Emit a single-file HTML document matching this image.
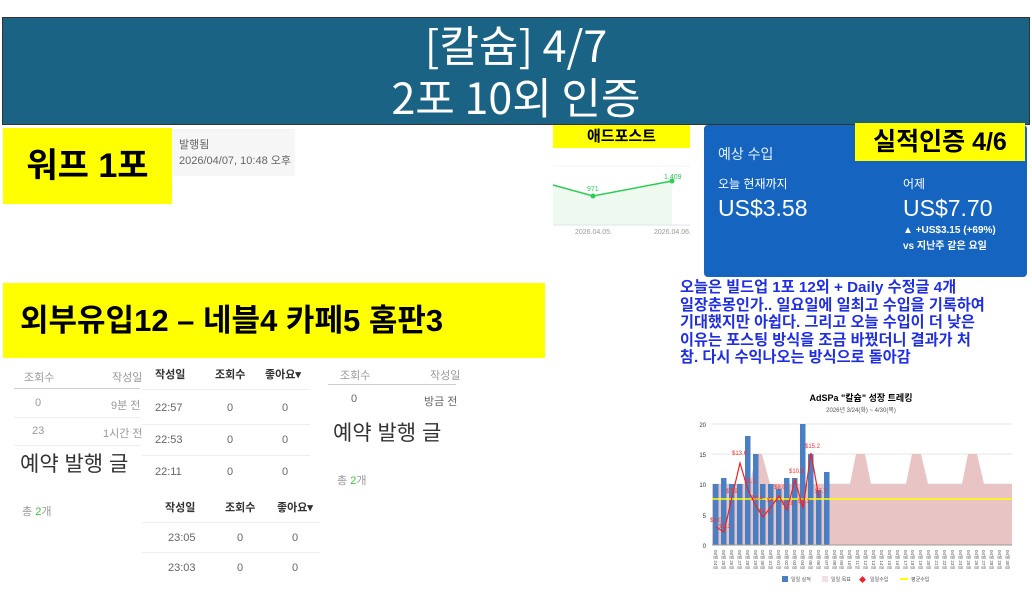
<!DOCTYPE html><html><head><meta charset="utf-8"><style>
body{margin:0;width:1032px;height:594px;background:#fff;position:relative;overflow:hidden;font-family:"Liberation Sans","Noto Sans CJK KR",sans-serif}
div,span{position:absolute;white-space:nowrap}
.y{background:#ff0;font-weight:bold;color:#000}
.g{color:#999;font-size:11px}
.d{color:#666;font-size:11px}
.hb{color:#333;font-size:11px;font-weight:bold}
.ln{height:1px;background:#eee}
</style></head><body>
<div style="left:2px;top:17px;width:1026px;height:106px;background:#1a6385;border:1px solid #333;color:#fff;text-align:center;font-size:43px;line-height:52px;font-family:'Noto Sans CJK KR',sans-serif;font-weight:400">[칼슘] 4/7<br>2포 10외 인증</div>

<div class="y" style="left:3px;top:128px;width:169px;height:76px;font-size:34px;line-height:76px;text-align:center">워프 1포</div>
<div style="left:172px;top:129px;width:123px;height:47px;background:#f6f6f6"></div>
<div class="d" style="left:179px;top:136px">발행됨</div>
<div class="d" style="left:179px;top:152px">2026/04/07, 10:48 오후</div>

<div class="y" style="left:553px;top:125px;width:137px;height:23px;font-size:15px;line-height:23px;text-align:center">애드포스트</div>
<svg style="position:absolute;left:540px;top:160px" width="160" height="80">
<line x1="13" y1="6" x2="150" y2="6" stroke="#f3f3f3"/>
<polygon points="13,25 53,36 132,21 132,65 13,65" fill="#eef9f0"/>
<line x1="13" y1="65" x2="150" y2="65" stroke="#dde4ee"/>
<polyline points="13,25 53,36 132,21" fill="none" stroke="#2ecc55" stroke-width="1.5"/>
<circle cx="53" cy="36" r="2.5" fill="#2ecc55"/><circle cx="132" cy="21" r="2.5" fill="#2ecc55"/>
<text x="47" y="31" font-size="7" fill="#2ecc55" font-family="Liberation Sans">971</text>
<text x="124" y="19" font-size="7" fill="#2ecc55" font-family="Liberation Sans">1,409</text>
<text x="35" y="74" font-size="7" fill="#999" font-family="Liberation Sans">2026.04.05.</text>
<text x="114" y="74" font-size="7" fill="#999" font-family="Liberation Sans">2026.04.06.</text>
</svg>

<div style="left:704px;top:125px;width:323px;height:152px;background:#1565c0;border-radius:4px"></div>
<div style="left:718px;top:144px;color:#e6eefa;font-size:14px">예상 수입</div>
<div style="left:718px;top:175px;color:#fff;font-size:12px">오늘 현재까지</div>
<div style="left:718px;top:195px;color:#fff;font-size:23px">US$3.58</div>
<div style="left:903px;top:175px;color:#fff;font-size:12px">어제</div>
<div style="left:903px;top:195px;color:#fff;font-size:23px">US$7.70</div>
<div style="left:903px;top:225px;color:#fff;font-size:10px;font-weight:bold">▲ +US$3.15 (+69%)</div>
<div style="left:903px;top:237px;color:#fff;font-size:10px;font-weight:bold">vs 지난주 같은 요일</div>
<div class="y" style="left:855px;top:123px;width:170px;height:38px;font-size:25px;line-height:38px;text-align:center">실적인증 4/6</div>

<div style="left:680px;top:279px;color:#1f2fe0;font-size:15.2px;font-weight:bold;line-height:17.5px">오늘은 빌드업 1포 12외 + Daily 수정글 4개<br>일장춘몽인가.. 일요일에 일최고 수입을 기록하여<br>기대했지만 아쉽다. 그리고 오늘 수입이 더 낮은<br>이유는 포스팅 방식을 조금 바꿨더니 결과가 처<br>참. 다시 수익나오는 방식으로 돌아감</div>

<div class="y" style="left:3px;top:283px;width:542px;height:75px;font-size:31px;line-height:75px;padding-left:17px;box-sizing:border-box">외부유입12 – 네블4 카페5 홈판3</div>

<div class="g" style="left:24px;top:369px">조회수</div><div class="g" style="left:112px;top:369px">작성일</div>
<div style="left:14px;top:388px;width:126px;height:1px;background:#ccc"></div>
<div class="g" style="left:35px;top:397px">0</div><div class="g" style="left:111px;top:397px">9분 전</div>
<div class="ln" style="left:14px;top:417px;width:126px"></div>
<div class="g" style="left:32px;top:425px">23</div><div class="g" style="left:103px;top:425px">1시간 전</div>
<div class="ln" style="left:14px;top:445px;width:126px"></div>
<div style="left:20px;top:448px;font-size:21px;color:#333">예약 발행 글</div>
<div class="g" style="left:22px;top:503px">총 <span style="position:static;color:#3c3">2</span>개</div>

<div class="hb" style="left:155px;top:366px">작성일</div><div class="hb" style="left:215px;top:366px">조회수</div><div class="hb" style="left:265px;top:366px">좋아요▾</div>
<div class="ln" style="left:142px;top:389px;width:168px"></div>
<div class="d" style="left:155px;top:402px">22:57</div><div class="d" style="left:227px;top:402px">0</div><div class="d" style="left:282px;top:402px">0</div>
<div class="ln" style="left:142px;top:424px;width:168px"></div>
<div class="d" style="left:155px;top:434px">22:53</div><div class="d" style="left:227px;top:434px">0</div><div class="d" style="left:282px;top:434px">0</div>
<div class="ln" style="left:142px;top:455px;width:168px"></div>
<div class="d" style="left:155px;top:466px">22:11</div><div class="d" style="left:227px;top:466px">0</div><div class="d" style="left:282px;top:466px">0</div>
<div class="hb" style="left:165px;top:499px">작성일</div><div class="hb" style="left:225px;top:499px">조회수</div><div class="hb" style="left:277px;top:499px">좋아요▾</div>
<div class="ln" style="left:142px;top:522px;width:178px"></div>
<div class="d" style="left:168px;top:532px">23:05</div><div class="d" style="left:237px;top:532px">0</div><div class="d" style="left:292px;top:532px">0</div>
<div class="ln" style="left:142px;top:552px;width:178px"></div>
<div class="d" style="left:168px;top:562px">23:03</div><div class="d" style="left:237px;top:562px">0</div><div class="d" style="left:292px;top:562px">0</div>

<div class="g" style="left:340px;top:367px">조회수</div><div class="g" style="left:430px;top:367px">작성일</div>
<div style="left:328px;top:384px;width:128px;height:1px;background:#ccc"></div>
<div class="d" style="left:351px;top:393px">0</div><div class="d" style="left:424px;top:393px">방금 전</div>
<div style="left:333px;top:417px;font-size:21px;color:#333">예약 발행 글</div>
<div class="g" style="left:337px;top:472px">총 <span style="position:static;color:#3c3">2</span>개</div>

<svg style="position:absolute;left:690px;top:385px" width="342" height="209" font-family="Liberation Sans,Noto Sans CJK KR,sans-serif">
<text x="171" y="16" font-size="9" font-weight="bold" text-anchor="middle">AdSPa "칼슘" 성장 트레킹</text>
<text x="171" y="27" font-size="6" fill="#555" text-anchor="middle">2026년 3/24(화) ~ 4/30(목)</text>
<g stroke="#e6e6e6"><line x1="22" y1="39" x2="322" y2="39"/><line x1="22" y1="69" x2="322" y2="69"/><line x1="22" y1="99" x2="322" y2="99"/><line x1="22" y1="130" x2="322" y2="130"/></g>
<g font-size="6" fill="#333" text-anchor="end"><text x="16" y="42">20</text><text x="16" y="72">15</text><text x="16" y="102">10</text><text x="16" y="133">5</text><text x="16" y="163">0</text></g>
<polygon points="22,99 60,99 66,69 72,69 80,99 160,99 166,69 175,69 181,99 216,99 222,69 231,69 238,99 272,99 278,69 287,69 294,99 322,99 322,160 22,160" fill="#e8c4c4"/>
<g fill="#4a7fc4">
<rect x="23" y="99" width="5.5" height="61"/><rect x="31" y="93" width="5.5" height="67"/><rect x="39" y="99" width="5.5" height="61"/><rect x="47" y="99" width="5.5" height="61"/><rect x="55" y="51" width="5.5" height="109"/><rect x="63" y="69" width="5.5" height="91"/><rect x="70" y="99" width="5.5" height="61"/><rect x="78" y="99" width="5.5" height="61"/><rect x="86" y="104" width="5.5" height="56"/><rect x="94" y="93" width="5.5" height="67"/><rect x="102" y="93" width="5.5" height="67"/><rect x="110" y="39" width="5.5" height="121"/><rect x="118" y="69" width="5.5" height="91"/><rect x="126" y="105" width="5.5" height="55"/><rect x="134" y="87" width="5.5" height="73"/>
</g>
<line x1="22" y1="160" x2="322" y2="160" stroke="#999"/>
<line x1="22" y1="114" x2="322" y2="114" stroke="#ff0" stroke-width="1.5"/>
<polyline points="26,142 34,147 42,112 50,78 58,105 66,121 73,132 81,122 89,111 97,125 105,95 113,123 121,68 129,113" fill="none" stroke="#e22" stroke-width="1.2"/>
<g font-size="6" fill="#e33"><text x="20" y="137">$3.0</text><text x="29" y="143">$2.1</text><text x="36" y="108">$7.9</text><text x="42" y="70">$13.6</text><text x="54" y="98">$9.1</text><text x="61" y="115">$6.4</text><text x="69" y="128">$4.6</text><text x="77" y="117">$6.2</text><text x="84" y="104">$8.0</text><text x="92" y="120">$5.8</text><text x="99" y="88">$10.8</text><text x="108" y="118">$6.1</text><text x="115" y="63">$15.2</text><text x="125" y="108">$7.7</text></g>
<g font-size="4.5" fill="#555">
<text transform="translate(24,165) rotate(90)">03월 24일</text><text transform="translate(32,165) rotate(90)">03월 25일</text><text transform="translate(40,165) rotate(90)">03월 26일</text><text transform="translate(48,165) rotate(90)">03월 27일</text><text transform="translate(56,165) rotate(90)">03월 28일</text><text transform="translate(64,165) rotate(90)">03월 29일</text><text transform="translate(71,165) rotate(90)">03월 30일</text><text transform="translate(79,165) rotate(90)">03월 31일</text><text transform="translate(87,165) rotate(90)">04월 01일</text><text transform="translate(95,165) rotate(90)">04월 02일</text><text transform="translate(103,165) rotate(90)">04월 03일</text><text transform="translate(111,165) rotate(90)">04월 04일</text><text transform="translate(119,165) rotate(90)">04월 05일</text><text transform="translate(127,165) rotate(90)">04월 06일</text><text transform="translate(135,165) rotate(90)">04월 07일</text><text transform="translate(143,165) rotate(90)">04월 08일</text><text transform="translate(150,165) rotate(90)">04월 09일</text><text transform="translate(158,165) rotate(90)">04월 10일</text><text transform="translate(166,165) rotate(90)">04월 11일</text><text transform="translate(174,165) rotate(90)">04월 12일</text><text transform="translate(182,165) rotate(90)">04월 13일</text><text transform="translate(190,165) rotate(90)">04월 14일</text><text transform="translate(198,165) rotate(90)">04월 15일</text><text transform="translate(206,165) rotate(90)">04월 16일</text><text transform="translate(214,165) rotate(90)">04월 17일</text><text transform="translate(221,165) rotate(90)">04월 18일</text><text transform="translate(229,165) rotate(90)">04월 19일</text><text transform="translate(237,165) rotate(90)">04월 20일</text><text transform="translate(245,165) rotate(90)">04월 21일</text><text transform="translate(253,165) rotate(90)">04월 22일</text><text transform="translate(261,165) rotate(90)">04월 23일</text><text transform="translate(269,165) rotate(90)">04월 24일</text><text transform="translate(277,165) rotate(90)">04월 25일</text><text transform="translate(285,165) rotate(90)">04월 26일</text><text transform="translate(292,165) rotate(90)">04월 27일</text><text transform="translate(300,165) rotate(90)">04월 28일</text><text transform="translate(308,165) rotate(90)">04월 29일</text><text transform="translate(316,165) rotate(90)">04월 30일</text>
</g>
<g font-size="5" fill="#555"><rect x="92" y="191" width="6" height="6" fill="#4a7fc4"/><text x="101" y="196">일일 실적</text><rect x="132" y="191" width="6" height="6" fill="#f3e0e0"/><text x="141" y="196">일일 목표</text><text x="169" y="197" fill="#e22" font-size="7">◆</text><text x="180" y="196">일일수입</text><rect x="210" y="193" width="8" height="2" fill="#ff0"/><text x="221" y="196">평균수입</text></g>
</svg>
</body></html>
